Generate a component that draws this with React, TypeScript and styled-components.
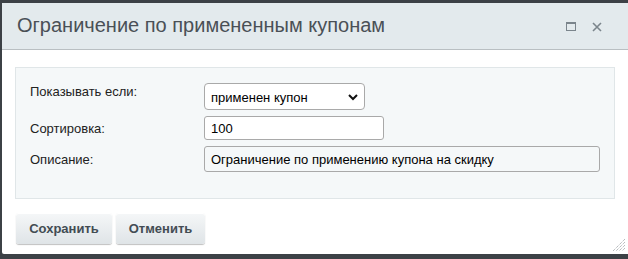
import React from "react";
import styled, { createGlobalStyle } from "styled-components";

const Global = createGlobalStyle`
  html, body { margin: 0; padding: 0; }
  body {
    background: #3c4146;
    font-family: "Liberation Sans", Arial, sans-serif;
    width: 628px;
    height: 259px;
    overflow: hidden;
  }
`;

const Dialog = styled.div`
  margin: 3px 0 0 2px;
  width: 628px;
  height: 251px;
  background: #fff;
  border-radius: 2px 0 0 2px;
  display: flex;
  flex-direction: column;
  position: relative;
  box-sizing: border-box;
`;

const Header = styled.div`
  height: 47px;
  box-sizing: border-box;
  background: #e3eaed;
  border-bottom: 1px solid #b9bfc2;
  display: flex;
  align-items: center;
  padding: 0 0 2px 15px;
`;

const Title = styled.div`
  flex: 1;
  font-family: "Liberation Sans", Arial, sans-serif;
  font-size: 20px;
  color: #4a5056;
`;

const HeaderIcons = styled.div`
  display: flex;
  align-items: center;
  gap: 16px;
  margin-right: 28px;
  margin-top: 3px;
`;

const IconBtn = styled.span`
  display: inline-flex;
  width: 10px;
  height: 10px;
  align-items: center;
  justify-content: center;
`;

const Body = styled.div`
  padding: 17px 13px 0 13px;
`;

const Panel = styled.div`
  width: 600px;
  box-sizing: border-box;
  background: #f5f8f9;
  border: 1px solid #e0e6e8;
  padding: 15px 14px 26px 14px;
  display: flex;
  flex-direction: column;
  gap: 6px;
`;

const Row = styled.div<{ $top?: boolean }>`
  display: flex;
  align-items: ${(p) => (p.$top ? "flex-start" : "center")};
`;

const Label = styled.label<{ $top?: boolean }>`
  width: 174px;
  flex: none;
  font-size: 13px;
  color: #222;
  padding-top: ${(p) => (p.$top ? "1px" : "0")};
`;

const Select = styled.div`
  width: 161px;
  height: 27px;
  box-sizing: border-box;
  border: 1px solid #a9a9a9;
  border-radius: 4px;
  background: #fff;
  display: flex;
  align-items: center;
  justify-content: space-between;
  padding: 2px 6px 0 6px;
  font-size: 13px;
  color: #000;
`;

const Input = styled.div<{ $w: number; $h: number }>`
  width: ${(p) => p.$w}px;
  height: ${(p) => p.$h}px;
  box-sizing: border-box;
  border: 1px solid #a9a9a9;
  border-radius: 3px;
  background: ${(p) => (p.$w > 300 ? "#f5f8f9" : "#fff")};
  display: flex;
  align-items: center;
  padding: 0 6px;
  font-size: 13px;
  color: #000;
`;

const Footer = styled.div`
  display: flex;
  gap: 4px;
  padding: 14px 0 0 14px;
`;

const Button = styled.button<{ $w: number }>`
  width: ${(p) => p.$w}px;
  height: 31px;
  border: none;
  border-radius: 3px;
  background: linear-gradient(#f5f7f8, #dfe4e7);
  box-shadow: 0 1px 1px rgba(0, 0, 0, 0.25), inset 0 1px 0 #fff;
  font-family: "Liberation Sans", Arial, sans-serif;
  font-weight: bold;
  font-size: 13px;
  color: #434c53;
  padding: 0;
  cursor: pointer;
`;

const Grip = styled.div`
  position: absolute;
  right: 4px;
  bottom: 2px;
  width: 14px;
  height: 14px;
`;

export default function App() {
  return (
    <>
      <Global />
      <Dialog>
        <Header>
          <Title>Ограничение по примененным купонам</Title>
          <HeaderIcons>
            <IconBtn>
              <svg width="10" height="10" viewBox="0 0 10 10">
                <rect x="0.5" y="0.5" width="9" height="8" fill="none" stroke="#7b858c" strokeWidth="1" />
                <line x1="0" y1="1.5" x2="10" y2="1.5" stroke="#7b858c" strokeWidth="1" />
              </svg>
            </IconBtn>
            <IconBtn>
              <svg width="10" height="10" viewBox="0 0 10 10">
                <path d="M1 1 L9 9 M9 1 L1 9" stroke="#7b858c" strokeWidth="1.6" />
              </svg>
            </IconBtn>
          </HeaderIcons>
        </Header>
        <Body>
          <Panel>
            <Row $top>
              <Label $top>Показывать если:</Label>
              <Select>
                <span>применен купон</span>
                <svg width="10" height="7" viewBox="0 0 10 7">
                  <path d="M1 1 L5 5 L9 1" fill="none" stroke="#111" strokeWidth="2" />
                </svg>
              </Select>
            </Row>
            <Row>
              <Label>Сортировка:</Label>
              <Input $w={180} $h={24}>100</Input>
            </Row>
            <Row>
              <Label>Описание:</Label>
              <Input $w={396} $h={26}>Ограничение по применению купона на скидку</Input>
            </Row>
          </Panel>
        </Body>
        <Footer>
          <Button $w={96}>Сохранить</Button>
          <Button $w={89}>Отменить</Button>
        </Footer>
        <Grip>
          <svg width="14" height="14" viewBox="0 0 14 14">
            <path d="M13 1 L1 13 M13 4 L4 13 M13 7 L7 13 M13 10 L10 13" stroke="#9aa0a4" strokeWidth="1" strokeDasharray="1 1" />
          </svg>
        </Grip>
      </Dialog>
    </>
  );
}
